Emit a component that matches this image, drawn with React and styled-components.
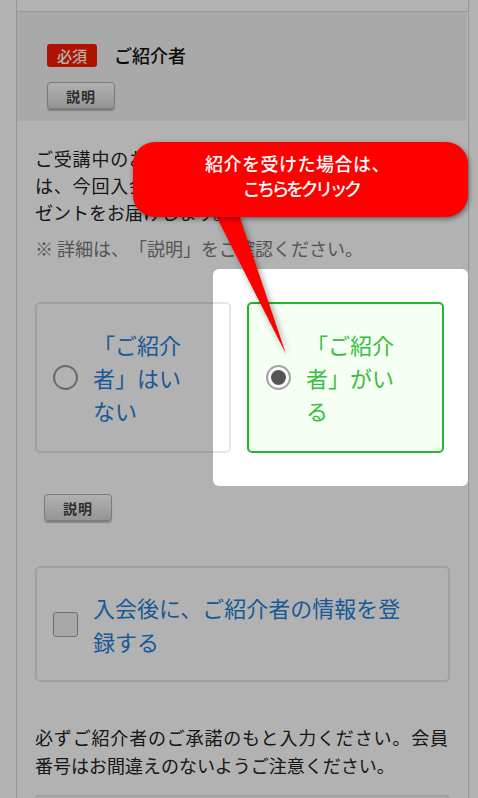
import styled, { createGlobalStyle } from "styled-components";

const GlobalStyle = createGlobalStyle`
  html, body {
    margin: 0;
    padding: 0;
    overflow: hidden;
    background: #fff;
  }
  body {
    font-family: "Noto Sans CJK JP", "Noto Sans", sans-serif;
    color: #222;
    text-spacing-trim: space-all;
  }
`;

const App = () => {
  return (
    <Page>
      <GlobalStyle />
      <Frame>
        <Section>
          <Head>
            <TitleRow>
              <Badge>必須</Badge>
              <Title>ご紹介者</Title>
            </TitleRow>
            <HelpButton>説明</HelpButton>
          </Head>

          <Body>
            <Lead>
              ご受講中のお友だちからご紹介で入会された場合は、今回入会されたあなたとご紹介者の方にプレゼントをお届けします。
            </Lead>
            <Note>※ 詳細は、「説明」をご確認ください。</Note>

            <Choices>
              <Choice>
                <Radio />
                <ChoiceLabel>「ご紹介者」はいない</ChoiceLabel>
              </Choice>
              <Choice $active>
                <Radio $checked />
                <ChoiceLabel $active>「ご紹介者」がいる</ChoiceLabel>
              </Choice>
            </Choices>

            <HelpButton $inBody>説明</HelpButton>

            <CheckCard>
              <CheckBox />
              <CheckLabel>入会後に、ご紹介者の情報を登録する</CheckLabel>
            </CheckCard>

            <Lead $bottom>
              必ずご紹介者のご承諾のもと入力ください。会員番号はお間違えのないようご注意ください。
            </Lead>
            <Input />
          </Body>
        </Section>
      </Frame>

      {/* guide overlay: dimmed page with a spotlight and a callout */}
      <Spotlight />
      <Tail viewBox="0 0 478 798" width="478" height="798">
        <polygon points="208,200 234,200 286,354" fill="#ff0000" />
      </Tail>
      <Callout>
        <CalloutLine $first>紹介を受けた場合は、</CalloutLine>
        <CalloutLine>こちらをクリック</CalloutLine>
      </Callout>
    </Page>
  );
};

const Page = styled.div`
  position: relative;
  height: 798px;
  overflow: hidden;
`;

const Frame = styled.div`
  box-sizing: border-box;
  width: 453px;
  min-height: 900px;
  margin-left: 16px;
  padding-top: 11px;
  border-left: 1px solid #d9d9d9;
  border-right: 1px solid #d9d9d9;
`;

const Section = styled.section`
  border-top: 1px solid #d9d9d9;
`;

const Head = styled.div`
  display: flex;
  flex-direction: column;
  align-items: flex-start;
  gap: 14px;
  margin-right: 2px;
  padding: 30px 0 12px 30px;
  background: #f2f2f2;
`;

const TitleRow = styled.div`
  display: flex;
  align-items: center;
  gap: 17px;
`;

const Badge = styled.span`
  display: flex;
  align-items: center;
  justify-content: center;
  width: 50px;
  height: 23px;
  border-radius: 3px;
  background: #fa1a00;
  color: #fff;
  font-size: 15px;
  font-weight: 500;
`;

const Title = styled.h2`
  margin: 0;
  font-size: 18px;
  font-weight: 500;
  color: #111;
`;

const HelpButton = styled.button`
  display: block;
  width: 68px;
  height: 27px;
  margin: ${(p) => (p.$inBody ? "41px 0 0 9px" : "0")};
  padding: 0;
  border: 1px solid #b0b0b0;
  border-radius: 4px;
  background: linear-gradient(#fdfdfd, #d6d6d6);
  box-shadow: 0 2px 1px rgba(0, 0, 0, 0.25);
  color: #444;
  font-family: inherit;
  font-size: 14px;
  font-weight: 700;
  letter-spacing: 1px;
`;

const Body = styled.div`
  padding: 0 18px 0 18px;
`;

const Lead = styled.p`
  margin: ${(p) => (p.$bottom ? "41px 2px 0 0" : "24px 2px 0 0")};
  font-size: 18px;
  line-height: ${(p) => (p.$bottom ? "28px" : "27px")};
  text-align: justify;
  color: #222;
`;

const Note = styled.p`
  margin: 9px 0 0;
  font-size: 18px;
  line-height: 27px;
  color: #7a7a7a;
`;

const Choices = styled.div`
  display: grid;
  grid-template-columns: 196px 197px;
  gap: 16px;
  margin-top: 40px;
`;

const Choice = styled.label`
  box-sizing: border-box;
  display: flex;
  align-items: center;
  gap: 15px;
  height: 151px;
  padding-left: ${(p) => (p.$active ? "17px" : "16px")};
  border: 2px solid ${(p) => (p.$active ? "#1fb82a" : "#e6e6e6")};
  border-radius: 5px;
  background: ${(p) => (p.$active ? "#f6fff4" : "#fff")};
`;

const Radio = styled.span`
  box-sizing: border-box;
  position: relative;
  flex: none;
  width: 25px;
  height: 25px;
  border-radius: 50%;
  border: 2px solid ${(p) => (p.$checked ? "#a3a3a3" : "#9a9a9a")};
  background: #fff;

  &::after {
    content: "";
    display: ${(p) => (p.$checked ? "block" : "none")};
    position: absolute;
    inset: 3px;
    border-radius: 50%;
    background: #555;
  }
`;

const ChoiceLabel = styled.span`
  width: 96px;
  font-size: 22px;
  line-height: 33px;
  color: ${(p) => (p.$active ? "#37be3c" : "#2680d9")};
`;

const CheckCard = styled.label`
  box-sizing: border-box;
  display: flex;
  align-items: center;
  gap: 15px;
  margin-top: 45px;
  padding: 22px 0 22px 16px;
  border: 2px solid #e6e6e6;
  border-radius: 5px;
  background: #fff;
`;

const CheckBox = styled.span`
  box-sizing: border-box;
  flex: none;
  width: 25px;
  height: 25px;
  border: 1.5px solid #a0a0a0;
  border-radius: 3px;
  background: #f1f1f1;
`;

const CheckLabel = styled.span`
  max-width: 318px;
  font-size: 22px;
  line-height: 34px;
  color: #2680d9;
`;

const Input = styled.div`
  height: 50px;
  margin-top: 16px;
  border: 2px solid #e6e6e6;
  border-radius: 4px;
`;

const Spotlight = styled.div`
  position: absolute;
  left: 213px;
  top: 269px;
  width: 255px;
  height: 217px;
  border-radius: 6px;
  box-shadow: 0 0 0 1200px rgba(0, 0, 0, 0.3);
  pointer-events: none;
  z-index: 1;
`;

const Tail = styled.svg`
  position: absolute;
  left: 0;
  top: 0;
  z-index: 2;
  pointer-events: none;
  filter: drop-shadow(2px 2px 3px rgba(0, 0, 0, 0.4));
`;

const Callout = styled.div`
  box-sizing: border-box;
  position: absolute;
  left: 133px;
  top: 142px;
  z-index: 3;
  display: flex;
  flex-direction: column;
  align-items: center;
  width: 335px;
  height: 75px;
  padding-top: 9px;
  border-radius: 22px;
  background: #ff0000;
  box-shadow: 1px 2px 5px rgba(0, 0, 0, 0.45);
  color: #fff;
  font-size: 18px;
  font-weight: 500;
  line-height: 25px;
`;

const CalloutLine = styled.span`
  padding-right: ${(p) => (p.$first ? "6px" : "0")};
  letter-spacing: ${(p) => (p.$first ? "0.5px" : "-3.5px")};
`;

export default App;
